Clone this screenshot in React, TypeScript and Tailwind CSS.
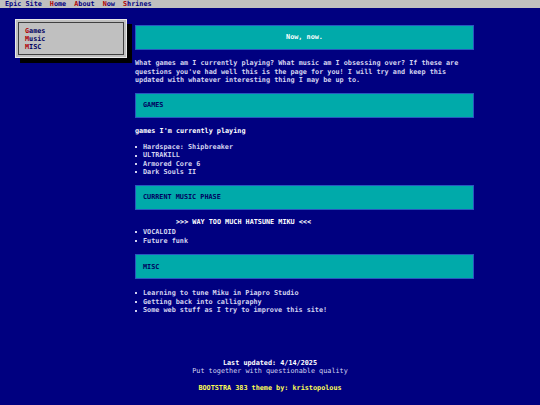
import React from "react";

const Bullet = ({ children }: { children: React.ReactNode }) => (
  <li className="flex items-center whitespace-nowrap">
    <span className="w-[8px] flex items-center">
      <span className="block w-[2px] h-[2px] bg-[#d0d0f0]" />
    </span>
    <span>{children}</span>
  </li>
);

const Panel = ({ children }: { children: React.ReactNode }) => (
  <div className="h-[25px] bg-[#00aaaa] border border-[#2858c0] flex items-center pl-[7px] text-[#000060] font-bold">
    {children}
  </div>
);

const Red = ({ c }: { c: string }) => <span className="text-[#b00000]">{c}</span>;

export default function App() {
  return (
    <div
      className="w-[540px] h-[405px] bg-[#000080] overflow-hidden text-[6.8px] text-[#d4d4f0] font-bold flex flex-col"
      style={{ fontFamily: '"DejaVu Sans Mono", "Liberation Mono", monospace' }}
    >
      <nav className="h-[8px] bg-[#c0c0c0] flex items-center pl-[5px] gap-[8px] font-bold text-[#000080] leading-[8px] shrink-0">
        <span>Epic Site</span>
        <span><Red c="H" />ome</span>
        <span><Red c="A" />bout</span>
        <span><Red c="N" />ow</span>
        <span><Red c="S" />hrines</span>
      </nav>
      <div className="flex">
        <div className="pl-[15px] pt-[11px] w-[135px] shrink-0">
          <div className="w-[112px] h-[39px] bg-[#c0c0c0] border border-[#e8e8e8] p-[2px] shadow-[5px_5px_0_#000]">
            <div className="w-full h-full border border-[#404040] pl-[6px] pt-[4px] font-bold text-[#000060] leading-[8px]">
              <div><Red c="G" />ames</div>
              <div><Red c="M" />usic</div>
              <div><Red c="M" />ISC</div>
            </div>
          </div>
        </div>
        <div className="w-[339px] pt-[17px] shrink-0">
          <div className="h-[25px] bg-[#00aaaa] border border-[#2858c0] flex items-center justify-center text-white font-bold">
            Now, now.
          </div>
          <p className="mt-[9px] leading-[8.5px] whitespace-nowrap">
            What games am I currently playing? What music am I obsessing over? If these are
            <br />
            questions you've had well this is the page for you! I will try and keep this
            <br />
            updated with whatever interesting thing I may be up to.
          </p>
          <div className="mt-[8px]">
            <Panel>GAMES</Panel>
          </div>
          <div className="mt-[9px] leading-[8.5px] text-white font-bold">games I'm currently playing</div>
          <ul className="mt-[8px] leading-[8.4px]">
            <Bullet>Hardspace: Shipbreaker</Bullet>
            <Bullet>ULTRAKILL</Bullet>
            <Bullet>Armored Core 6</Bullet>
            <Bullet>Dark Souls II</Bullet>
          </ul>
          <div className="mt-[8px]">
            <Panel>CURRENT MUSIC PHASE</Panel>
          </div>
          <div className="mt-[8px] pl-[41px] leading-[8.5px] text-white font-bold">
            &gt;&gt;&gt; WAY TOO MUCH HATSUNE MIKU &lt;&lt;&lt;
          </div>
          <ul className="mt-[2px] leading-[8.5px]">
            <Bullet>VOCALOID</Bullet>
            <Bullet>Future funk</Bullet>
          </ul>
          <div className="mt-[9px]">
            <Panel>MISC</Panel>
          </div>
          <ul className="mt-[10px] leading-[8.6px]">
            <Bullet>Learning to tune Miku in Piapro Studio</Bullet>
            <Bullet>Getting back into calligraphy</Bullet>
            <Bullet>Some web stuff as I try to improve this site!</Bullet>
          </ul>
        </div>
      </div>
      <footer className="mt-[44px] text-center leading-[8.5px]">
        <div className="text-white font-bold">Last updated: 4/14/2025</div>
        <div className="font-normal">Put together with questionable quality</div>
        <div className="mt-[8px] text-[#ffff55] font-bold">BOOTSTRA 383 theme by: kristopolous</div>
      </footer>
    </div>
  );
}
